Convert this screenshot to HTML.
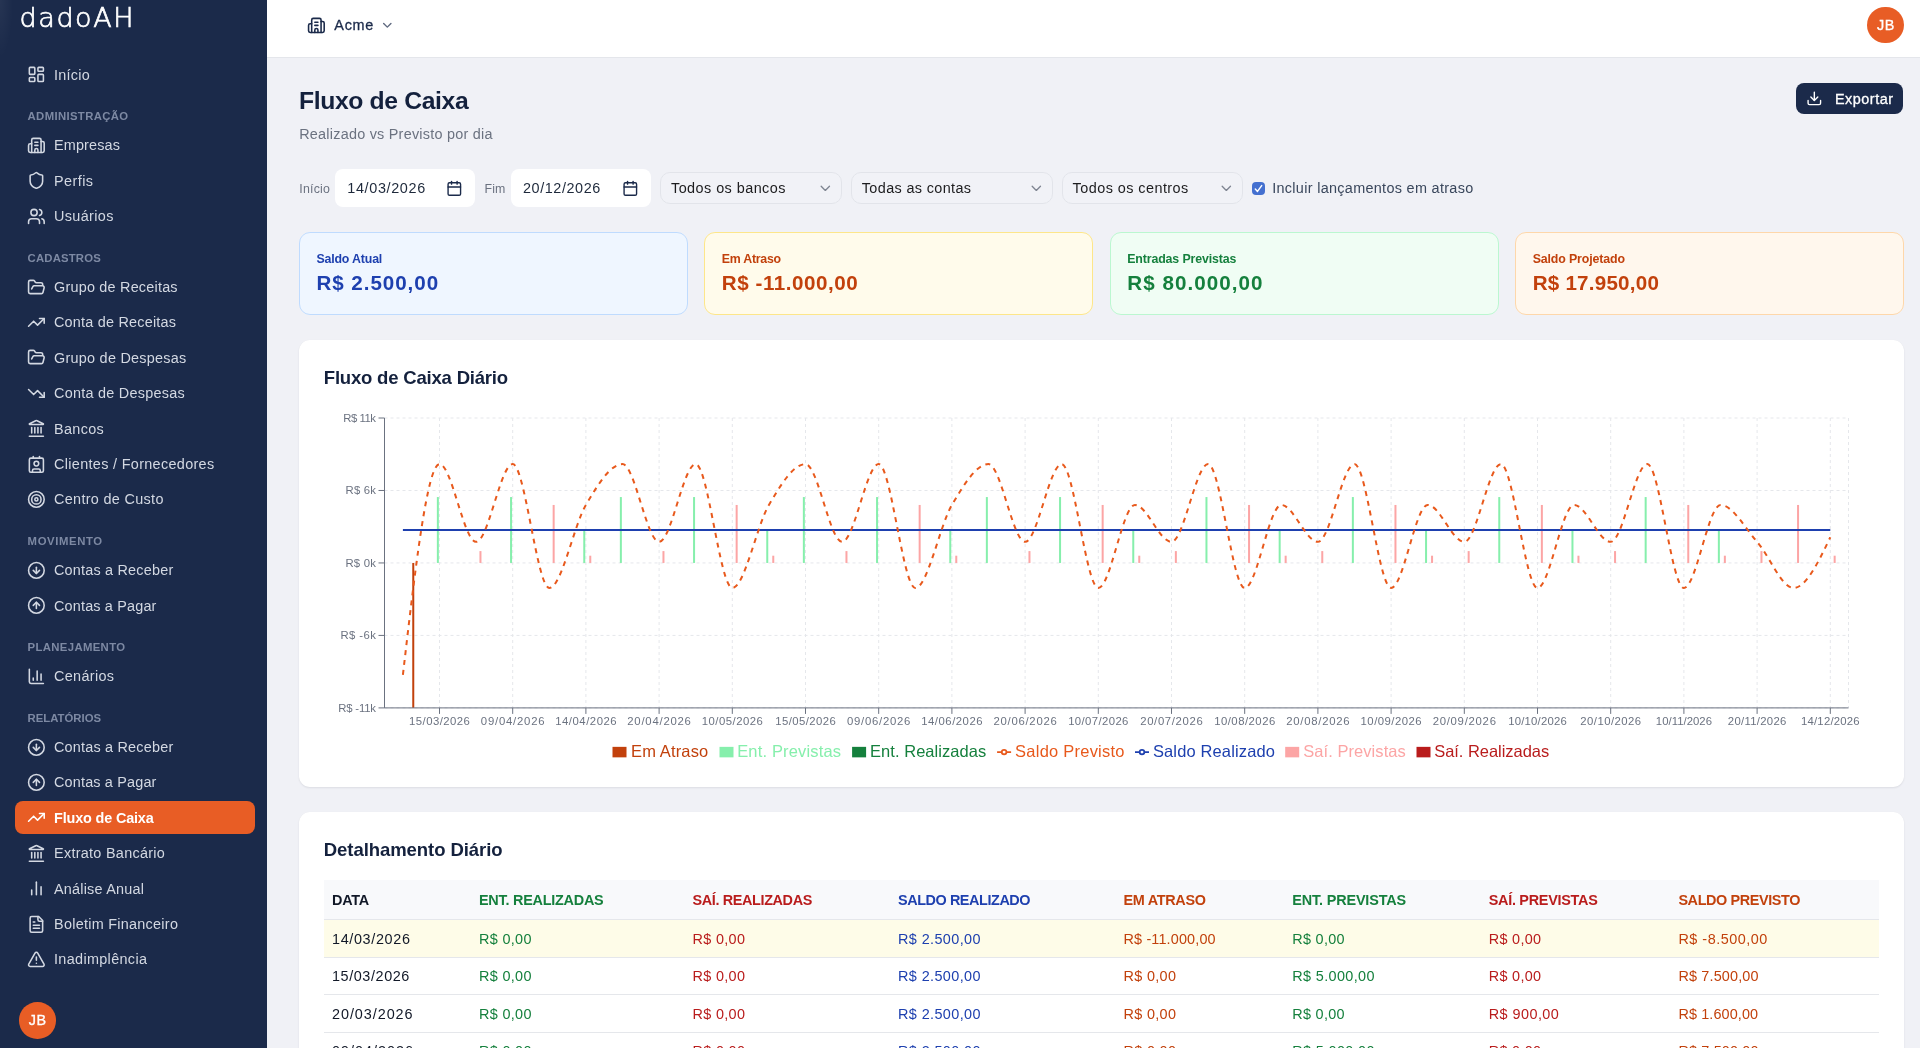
<!DOCTYPE html>
<html lang="pt-BR">
<head>
<meta charset="utf-8">
<title>Fluxo de Caixa - dadoAH</title>
<style>
html,body{margin:0;padding:0}
body{width:1920px;height:1048px;overflow:hidden;position:relative;background:#f0f1f6;font-family:"Liberation Sans",sans-serif;-webkit-font-smoothing:antialiased}
a{text-decoration:none}
</style>
</head>
<body>
<div id="app" style="position:absolute;left:0;top:0;width:1920px;height:1048px;will-change:transform">
<aside style="position:absolute;left:0;top:0;width:267px;height:1048px;background:radial-gradient(ellipse 13px 58px at 0 0, rgba(255,255,255,.05), rgba(255,255,255,0) 100%),#1b2a4a">
<div style="position:absolute;left:19.6px;top:1px;font-family:'DejaVu Sans','Liberation Sans',sans-serif;font-weight:200;font-size:27px;line-height:34px;letter-spacing:1.55px;-webkit-text-stroke:0.7px #fff;color:#fff;white-space:nowrap">dadoAH</div>
<nav>
<svg style="position:absolute;left:27.12px;top:65.42px;opacity:1" width="18.75" height="18.75" viewBox="0 0 24 24" fill="none" stroke="#d3d8e2" stroke-width="2" stroke-linecap="round" stroke-linejoin="round"><rect width="7" height="9" x="3" y="3" rx="1"/><rect width="7" height="5" x="14" y="3" rx="1"/><rect width="7" height="9" x="14" y="12" rx="1"/><rect width="7" height="5" x="3" y="16" rx="1"/></svg>
<a style="position:absolute;left:54.00px;top:65px;font-size:14.42px;line-height:20px;font-weight:400;letter-spacing:0.246px;color:#d3d8e2;white-space:nowrap;">Início</a>
<div style="position:absolute;left:27.60px;top:108px;font-size:11.33px;line-height:16px;font-weight:700;letter-spacing:0.35px;color:#7d89a3;white-space:nowrap;">ADMINISTRAÇÃO</div>
<svg style="position:absolute;left:27.12px;top:135.92px;opacity:1" width="18.75" height="18.75" viewBox="0 0 24 24" fill="none" stroke="#d3d8e2" stroke-width="2" stroke-linecap="round" stroke-linejoin="round"><path d="M10 12h4"/><path d="M10 8h4"/><path d="M14 21v-3a2 2 0 0 0-4 0v3"/><path d="M6 10H4a2 2 0 0 0-2 2v7a2 2 0 0 0 2 2h16a2 2 0 0 0 2-2V9a2 2 0 0 0-2-2h-2"/><path d="M6 21V5a2 2 0 0 1 2-2h8a2 2 0 0 1 2 2v16"/></svg>
<a style="position:absolute;left:54.00px;top:135px;font-size:14.42px;line-height:20px;font-weight:400;letter-spacing:0.156px;color:#d3d8e2;white-space:nowrap;">Empresas</a>
<svg style="position:absolute;left:27.12px;top:171.34px;opacity:1" width="18.75" height="18.75" viewBox="0 0 24 24" fill="none" stroke="#d3d8e2" stroke-width="2" stroke-linecap="round" stroke-linejoin="round"><path d="M20 13c0 5-3.5 7.5-7.66 8.95a1 1 0 0 1-.67-.01C7.5 20.5 4 18 4 13V6a1 1 0 0 1 1-1c2 0 4.5-1.2 6.24-2.72a1.17 1.17 0 0 1 1.52 0C14.51 3.81 17 5 19 5a1 1 0 0 1 1 1z"/></svg>
<a style="position:absolute;left:54.00px;top:171px;font-size:14.42px;line-height:20px;font-weight:400;letter-spacing:0.431px;color:#d3d8e2;white-space:nowrap;">Perfis</a>
<svg style="position:absolute;left:27.12px;top:206.76px;opacity:1" width="18.75" height="18.75" viewBox="0 0 24 24" fill="none" stroke="#d3d8e2" stroke-width="2" stroke-linecap="round" stroke-linejoin="round"><path d="M16 21v-2a4 4 0 0 0-4-4H6a4 4 0 0 0-4 4v2"/><circle cx="9" cy="7" r="4"/><path d="M22 21v-2a4 4 0 0 0-3-3.87"/><path d="M16 3.13a4 4 0 0 1 0 7.75"/></svg>
<a style="position:absolute;left:54.00px;top:206px;font-size:14.42px;line-height:20px;font-weight:400;letter-spacing:0.361px;color:#d3d8e2;white-space:nowrap;">Usuários</a>
<div style="position:absolute;left:27.60px;top:250px;font-size:11.33px;line-height:16px;font-weight:700;letter-spacing:0.171px;color:#7d89a3;white-space:nowrap;">CADASTROS</div>
<svg style="position:absolute;left:27.12px;top:277.52px;opacity:1" width="18.75" height="18.75" viewBox="0 0 24 24" fill="none" stroke="#d3d8e2" stroke-width="2" stroke-linecap="round" stroke-linejoin="round"><path d="m6 14 1.5-2.9A2 2 0 0 1 9.24 10H20a2 2 0 0 1 1.94 2.5l-1.54 6a2 2 0 0 1-1.95 1.5H4a2 2 0 0 1-2-2V5a2 2 0 0 1 2-2h3.9a2 2 0 0 1 1.69.9l.81 1.2a2 2 0 0 0 1.67.9H18a2 2 0 0 1 2 2v2"/></svg>
<a style="position:absolute;left:54.00px;top:277px;font-size:14.42px;line-height:20px;font-weight:400;letter-spacing:0.216px;color:#d3d8e2;white-space:nowrap;">Grupo de Receitas</a>
<svg style="position:absolute;left:27.12px;top:312.94px;opacity:1" width="18.75" height="18.75" viewBox="0 0 24 24" fill="none" stroke="#d3d8e2" stroke-width="2" stroke-linecap="round" stroke-linejoin="round"><path d="M16 7h6v6"/><path d="m22 7-8.5 8.5-5-5L2 17"/></svg>
<a style="position:absolute;left:54.00px;top:312px;font-size:14.42px;line-height:20px;font-weight:400;letter-spacing:0.217px;color:#d3d8e2;white-space:nowrap;">Conta de Receitas</a>
<svg style="position:absolute;left:27.12px;top:348.36px;opacity:1" width="18.75" height="18.75" viewBox="0 0 24 24" fill="none" stroke="#d3d8e2" stroke-width="2" stroke-linecap="round" stroke-linejoin="round"><path d="m6 14 1.5-2.9A2 2 0 0 1 9.24 10H20a2 2 0 0 1 1.94 2.5l-1.54 6a2 2 0 0 1-1.95 1.5H4a2 2 0 0 1-2-2V5a2 2 0 0 1 2-2h3.9a2 2 0 0 1 1.69.9l.81 1.2a2 2 0 0 0 1.67.9H18a2 2 0 0 1 2 2v2"/></svg>
<a style="position:absolute;left:54.00px;top:348px;font-size:14.42px;line-height:20px;font-weight:400;letter-spacing:0.261px;color:#d3d8e2;white-space:nowrap;">Grupo de Despesas</a>
<svg style="position:absolute;left:27.12px;top:383.78px;opacity:1" width="18.75" height="18.75" viewBox="0 0 24 24" fill="none" stroke="#d3d8e2" stroke-width="2" stroke-linecap="round" stroke-linejoin="round"><path d="M16 17h6v-6"/><path d="m22 17-8.5-8.5-5 5L2 7"/></svg>
<a style="position:absolute;left:54.00px;top:383px;font-size:14.42px;line-height:20px;font-weight:400;letter-spacing:0.262px;color:#d3d8e2;white-space:nowrap;">Conta de Despesas</a>
<svg style="position:absolute;left:27.12px;top:419.20px;opacity:1" width="18.75" height="18.75" viewBox="0 0 24 24" fill="none" stroke="#d3d8e2" stroke-width="2" stroke-linecap="round" stroke-linejoin="round"><path d="M10 18v-7"/><path d="M11.12 2.198a2 2 0 0 1 1.76.006l7.866 3.847c.476.233.31.949-.22.949H3.474c-.53 0-.695-.716-.22-.949z"/><path d="M14 18v-7"/><path d="M18 18v-7"/><path d="M3 22h18"/><path d="M6 18v-7"/></svg>
<a style="position:absolute;left:54.00px;top:419px;font-size:14.42px;line-height:20px;font-weight:400;letter-spacing:0.332px;color:#d3d8e2;white-space:nowrap;">Bancos</a>
<svg style="position:absolute;left:27.12px;top:454.62px;opacity:1" width="18.75" height="18.75" viewBox="0 0 24 24" fill="none" stroke="#d3d8e2" stroke-width="2" stroke-linecap="round" stroke-linejoin="round"><path d="M16 2v2"/><path d="M7 22v-2a2 2 0 0 1 2-2h6a2 2 0 0 1 2 2v2"/><path d="M8 2v2"/><circle cx="12" cy="11" r="3"/><rect x="3" y="4" width="18" height="18" rx="2"/></svg>
<a style="position:absolute;left:54.00px;top:454px;font-size:14.42px;line-height:20px;font-weight:400;letter-spacing:0.328px;color:#d3d8e2;white-space:nowrap;">Clientes / Fornecedores</a>
<svg style="position:absolute;left:27.12px;top:490.05px;opacity:1" width="18.75" height="18.75" viewBox="0 0 24 24" fill="none" stroke="#d3d8e2" stroke-width="2" stroke-linecap="round" stroke-linejoin="round"><circle cx="12" cy="12" r="10"/><circle cx="12" cy="12" r="6"/><circle cx="12" cy="12" r="2"/></svg>
<a style="position:absolute;left:54.00px;top:489px;font-size:14.42px;line-height:20px;font-weight:400;letter-spacing:0.323px;color:#d3d8e2;white-space:nowrap;">Centro de Custo</a>
<div style="position:absolute;left:27.60px;top:533px;font-size:11.33px;line-height:16px;font-weight:700;letter-spacing:0.601px;color:#7d89a3;white-space:nowrap;">MOVIMENTO</div>
<svg style="position:absolute;left:27.12px;top:560.83px;opacity:1" width="18.75" height="18.75" viewBox="0 0 24 24" fill="none" stroke="#d3d8e2" stroke-width="2" stroke-linecap="round" stroke-linejoin="round"><circle cx="12" cy="12" r="10"/><path d="M12 8v8"/><path d="m8 12 4 4 4-4"/></svg>
<a style="position:absolute;left:54.00px;top:560px;font-size:14.42px;line-height:20px;font-weight:400;letter-spacing:0.205px;color:#d3d8e2;white-space:nowrap;">Contas a Receber</a>
<svg style="position:absolute;left:27.12px;top:596.25px;opacity:1" width="18.75" height="18.75" viewBox="0 0 24 24" fill="none" stroke="#d3d8e2" stroke-width="2" stroke-linecap="round" stroke-linejoin="round"><circle cx="12" cy="12" r="10"/><path d="m16 12-4-4-4 4"/><path d="M12 16V8"/></svg>
<a style="position:absolute;left:54.00px;top:596px;font-size:14.42px;line-height:20px;font-weight:400;letter-spacing:0.174px;color:#d3d8e2;white-space:nowrap;">Contas a Pagar</a>
<div style="position:absolute;left:27.60px;top:639px;font-size:11.33px;line-height:16px;font-weight:700;letter-spacing:0.351px;color:#7d89a3;white-space:nowrap;">PLANEJAMENTO</div>
<svg style="position:absolute;left:27.12px;top:666.93px;opacity:1" width="18.75" height="18.75" viewBox="0 0 24 24" fill="none" stroke="#d3d8e2" stroke-width="2" stroke-linecap="round" stroke-linejoin="round"><path d="M3 3v16a2 2 0 0 0 2 2h16"/><path d="M18 17V9"/><path d="M13 17V5"/><path d="M8 17v-3"/></svg>
<a style="position:absolute;left:54.00px;top:666px;font-size:14.42px;line-height:20px;font-weight:400;letter-spacing:0.329px;color:#d3d8e2;white-space:nowrap;">Cenários</a>
<div style="position:absolute;left:27.60px;top:710px;font-size:11.33px;line-height:16px;font-weight:700;letter-spacing:0.007px;color:#7d89a3;white-space:nowrap;">RELATÓRIOS</div>
<svg style="position:absolute;left:27.12px;top:737.53px;opacity:1" width="18.75" height="18.75" viewBox="0 0 24 24" fill="none" stroke="#d3d8e2" stroke-width="2" stroke-linecap="round" stroke-linejoin="round"><circle cx="12" cy="12" r="10"/><path d="M12 8v8"/><path d="m8 12 4 4 4-4"/></svg>
<a style="position:absolute;left:54.00px;top:737px;font-size:14.42px;line-height:20px;font-weight:400;letter-spacing:0.205px;color:#d3d8e2;white-space:nowrap;">Contas a Receber</a>
<svg style="position:absolute;left:27.12px;top:772.95px;opacity:1" width="18.75" height="18.75" viewBox="0 0 24 24" fill="none" stroke="#d3d8e2" stroke-width="2" stroke-linecap="round" stroke-linejoin="round"><circle cx="12" cy="12" r="10"/><path d="m16 12-4-4-4 4"/><path d="M12 16V8"/></svg>
<a style="position:absolute;left:54.00px;top:772px;font-size:14.42px;line-height:20px;font-weight:400;letter-spacing:0.174px;color:#d3d8e2;white-space:nowrap;">Contas a Pagar</a>
<div style="position:absolute;left:15px;top:800.89px;width:240px;height:33.3px;border-radius:8px;background:#e85d25"></div>
<svg style="position:absolute;left:27.12px;top:808.37px;opacity:1" width="18.75" height="18.75" viewBox="0 0 24 24" fill="none" stroke="#ffffff" stroke-width="2" stroke-linecap="round" stroke-linejoin="round"><path d="M16 7h6v6"/><path d="m22 7-8.5 8.5-5-5L2 17"/></svg>
<a style="position:absolute;left:54.00px;top:808px;font-size:14.42px;line-height:20px;font-weight:700;letter-spacing:-0.15px;color:#ffffff;white-space:nowrap;">Fluxo de Caixa</a>
<svg style="position:absolute;left:27.12px;top:843.79px;opacity:1" width="18.75" height="18.75" viewBox="0 0 24 24" fill="none" stroke="#d3d8e2" stroke-width="2" stroke-linecap="round" stroke-linejoin="round"><path d="M10 18v-7"/><path d="M11.12 2.198a2 2 0 0 1 1.76.006l7.866 3.847c.476.233.31.949-.22.949H3.474c-.53 0-.695-.716-.22-.949z"/><path d="M14 18v-7"/><path d="M18 18v-7"/><path d="M3 22h18"/><path d="M6 18v-7"/></svg>
<a style="position:absolute;left:54.00px;top:843px;font-size:14.42px;line-height:20px;font-weight:400;letter-spacing:0.287px;color:#d3d8e2;white-space:nowrap;">Extrato Bancário</a>
<svg style="position:absolute;left:27.12px;top:879.21px;opacity:1" width="18.75" height="18.75" viewBox="0 0 24 24" fill="none" stroke="#d3d8e2" stroke-width="2" stroke-linecap="round" stroke-linejoin="round"><path d="M18 20V10"/><path d="M12 20V4"/><path d="M6 20v-6"/></svg>
<a style="position:absolute;left:54.00px;top:879px;font-size:14.42px;line-height:20px;font-weight:400;letter-spacing:0.216px;color:#d3d8e2;white-space:nowrap;">Análise Anual</a>
<svg style="position:absolute;left:27.12px;top:914.63px;opacity:1" width="18.75" height="18.75" viewBox="0 0 24 24" fill="none" stroke="#d3d8e2" stroke-width="2" stroke-linecap="round" stroke-linejoin="round"><path d="M15 2H6a2 2 0 0 0-2 2v16a2 2 0 0 0 2 2h12a2 2 0 0 0 2-2V7Z"/><path d="M14 2v4a2 2 0 0 0 2 2h4"/><path d="M10 9H8"/><path d="M16 13H8"/><path d="M16 17H8"/></svg>
<a style="position:absolute;left:54.00px;top:914px;font-size:14.42px;line-height:20px;font-weight:400;letter-spacing:0.271px;color:#d3d8e2;white-space:nowrap;">Boletim Financeiro</a>
<svg style="position:absolute;left:27.12px;top:950.05px;opacity:1" width="18.75" height="18.75" viewBox="0 0 24 24" fill="none" stroke="#d3d8e2" stroke-width="2" stroke-linecap="round" stroke-linejoin="round"><path d="m21.73 18-8-14a2 2 0 0 0-3.48 0l-8 14A2 2 0 0 0 4 21h16a2 2 0 0 0 1.73-3"/><path d="M12 9v4"/><path d="M12 17h.01"/></svg>
<a style="position:absolute;left:54.00px;top:949px;font-size:14.42px;line-height:20px;font-weight:400;letter-spacing:0.339px;color:#d3d8e2;white-space:nowrap;">Inadimplência</a>
</nav>
<div style="position:absolute;left:19px;top:1002.1px;width:36.6px;height:36.6px;border-radius:50%;background:#e85d25"></div>
<div style="position:absolute;left:28.66px;top:1010px;font-size:14.42px;line-height:20px;font-weight:400;letter-spacing:0.659px;color:#fff;white-space:nowrap;-webkit-text-stroke:0.3px #fff;">JB</div>
</aside>
<header style="position:absolute;left:267px;top:0;width:1653px;height:57px;background:#fff;border-bottom:1px solid #e4e6eb">
</header>
<svg style="position:absolute;left:307.12px;top:15.57px;opacity:1" width="18.75" height="18.75" viewBox="0 0 24 24" fill="none" stroke="#1b2a4a" stroke-width="2" stroke-linecap="round" stroke-linejoin="round"><path d="M10 12h4"/><path d="M10 8h4"/><path d="M14 21v-3a2 2 0 0 0-4 0v3"/><path d="M6 10H4a2 2 0 0 0-2 2v7a2 2 0 0 0 2 2h16a2 2 0 0 0 2-2V9a2 2 0 0 0-2-2h-2"/><path d="M6 21V5a2 2 0 0 1 2-2h8a2 2 0 0 1 2 2v16"/></svg>
<div style="position:absolute;left:334.30px;top:15px;font-size:14.42px;line-height:20px;font-weight:400;letter-spacing:0.744px;color:#1b2a4a;white-space:nowrap;-webkit-text-stroke:0.3px #1b2a4a;">Acme</div>
<svg style="position:absolute;left:379.60px;top:17.80px;opacity:0.7" width="14.6" height="14.6" viewBox="0 0 24 24" fill="none" stroke="#1b2a4a" stroke-width="2.3" stroke-linecap="round" stroke-linejoin="round"><path d="m6 9 6 6 6-6"/></svg>
<div style="position:absolute;left:1867.3px;top:6.7px;width:36.6px;height:36.6px;border-radius:50%;background:#e85d25"></div>
<div style="position:absolute;left:1876.96px;top:15px;font-size:14.42px;line-height:20px;font-weight:400;letter-spacing:0.659px;color:#fff;white-space:nowrap;-webkit-text-stroke:0.3px #fff;">JB</div>
<h1 style="position:absolute;left:299.00px;top:85px;font-size:24.72px;line-height:31px;font-weight:700;letter-spacing:-0.371px;color:#14213d;white-space:nowrap;margin:0;">Fluxo de Caixa</h1>
<p style="position:absolute;left:299.20px;top:124px;font-size:14.42px;line-height:20px;font-weight:400;letter-spacing:0.237px;color:#6b7280;white-space:nowrap;margin:0;">Realizado vs Previsto por dia</p>
<div style="position:absolute;left:1796px;top:83px;width:107px;height:31px;border-radius:8px;background:#1b2a4a"></div>
<svg style="position:absolute;left:1806.16px;top:90.16px;opacity:1" width="16.67" height="16.67" viewBox="0 0 24 24" fill="none" stroke="#fff" stroke-width="2" stroke-linecap="round" stroke-linejoin="round"><path d="M21 15v4a2 2 0 0 1-2 2H5a2 2 0 0 1-2-2v-4"/><path d="m7 10 5 5 5-5"/><path d="M12 15V3"/></svg>
<div style="position:absolute;left:1835.00px;top:89px;font-size:14.42px;line-height:20px;font-weight:400;letter-spacing:0.5px;color:#fff;white-space:nowrap;-webkit-text-stroke:0.3px #fff;">Exportar</div>
<div style="position:absolute;left:299.30px;top:180px;font-size:12.36px;line-height:18px;font-weight:400;letter-spacing:0.205px;color:#6b7280;white-space:nowrap;">Início</div>
<div style="position:absolute;left:335.1px;top:169.4px;width:140.2px;height:37.6px;border-radius:8px;background:#fff"></div>
<div style="position:absolute;left:347.30px;top:178px;font-size:14.42px;line-height:20px;font-weight:400;letter-spacing:0.644px;color:#1e293b;white-space:nowrap;">14/03/2026</div>
<svg style="position:absolute;left:446.42px;top:180.06px;opacity:1" width="16.67" height="16.67" viewBox="0 0 24 24" fill="none" stroke="#1b2a4a" stroke-width="2" stroke-linecap="round" stroke-linejoin="round"><path d="M8 2v4"/><path d="M16 2v4"/><rect width="18" height="18" x="3" y="4" rx="2"/><path d="M3 10h18"/></svg>
<div style="position:absolute;left:484.60px;top:180px;font-size:12.36px;line-height:18px;font-weight:400;letter-spacing:0.089px;color:#6b7280;white-space:nowrap;">Fim</div>
<div style="position:absolute;left:510.7px;top:169.4px;width:140.2px;height:37.6px;border-radius:8px;background:#fff"></div>
<div style="position:absolute;left:523.00px;top:178px;font-size:14.42px;line-height:20px;font-weight:400;letter-spacing:0.575px;color:#1e293b;white-space:nowrap;">20/12/2026</div>
<svg style="position:absolute;left:621.96px;top:180.06px;opacity:1" width="16.67" height="16.67" viewBox="0 0 24 24" fill="none" stroke="#1b2a4a" stroke-width="2" stroke-linecap="round" stroke-linejoin="round"><path d="M8 2v4"/><path d="M16 2v4"/><rect width="18" height="18" x="3" y="4" rx="2"/><path d="M3 10h18"/></svg>
<div style="position:absolute;left:660.2px;top:172px;width:181.4px;height:32.4px;box-sizing:border-box;border:1px solid #e2e4ea;border-radius:10px;background:#f1f2f7"></div>
<div style="position:absolute;left:671.00px;top:178px;font-size:14.42px;line-height:20px;font-weight:400;letter-spacing:0.452px;color:#1c1c1e;white-space:nowrap;">Todos os bancos</div>
<svg style="position:absolute;left:816.87px;top:180.06px;opacity:0.85" width="16.67" height="16.67" viewBox="0 0 24 24" fill="none" stroke="#6b7280" stroke-width="1.9" stroke-linecap="round" stroke-linejoin="round"><path d="m6 9 6 6 6-6"/></svg>
<div style="position:absolute;left:851.0px;top:172px;width:201.5px;height:32.4px;box-sizing:border-box;border:1px solid #e2e4ea;border-radius:10px;background:#f1f2f7"></div>
<div style="position:absolute;left:861.80px;top:178px;font-size:14.42px;line-height:20px;font-weight:400;letter-spacing:0.368px;color:#1c1c1e;white-space:nowrap;">Todas as contas</div>
<svg style="position:absolute;left:1027.87px;top:180.06px;opacity:0.85" width="16.67" height="16.67" viewBox="0 0 24 24" fill="none" stroke="#6b7280" stroke-width="1.9" stroke-linecap="round" stroke-linejoin="round"><path d="m6 9 6 6 6-6"/></svg>
<div style="position:absolute;left:1061.5px;top:172px;width:181.7px;height:32.4px;box-sizing:border-box;border:1px solid #e2e4ea;border-radius:10px;background:#f1f2f7"></div>
<div style="position:absolute;left:1072.60px;top:178px;font-size:14.42px;line-height:20px;font-weight:400;letter-spacing:0.451px;color:#1c1c1e;white-space:nowrap;">Todos os centros</div>
<svg style="position:absolute;left:1218.46px;top:180.06px;opacity:0.85" width="16.67" height="16.67" viewBox="0 0 24 24" fill="none" stroke="#6b7280" stroke-width="1.9" stroke-linecap="round" stroke-linejoin="round"><path d="m6 9 6 6 6-6"/></svg>
<div style="position:absolute;left:1251.9px;top:181.9px;width:12.7px;height:12.7px;border-radius:4px;background:#4470d0"></div>
<svg style="position:absolute;left:1251.9px;top:181.9px" width="12.7" height="12.7" viewBox="0 0 12.7 12.7" fill="none" stroke="#fff" stroke-width="1.45" stroke-linecap="round" stroke-linejoin="round"><path d="M3.3 7.0L5.5 9.4L9.7 3.6"/></svg>
<div style="position:absolute;left:1272.20px;top:178px;font-size:14.42px;line-height:20px;font-weight:400;letter-spacing:0.315px;color:#3a475c;white-space:nowrap;">Incluir lançamentos em atraso</div>
<div style="position:absolute;left:299.00px;top:232px;width:388.75px;height:83.3px;box-sizing:border-box;border:1px solid #bfdbfe;border-radius:11px;background:#eff6ff"></div>
<div style="position:absolute;left:316.40px;top:250px;font-size:12.36px;line-height:18px;font-weight:700;letter-spacing:-0.162px;color:#1e40af;white-space:nowrap;">Saldo Atual</div>
<div style="position:absolute;left:316.40px;top:269px;font-size:20.6px;line-height:27px;font-weight:700;letter-spacing:0.953px;color:#1e40af;white-space:nowrap;">R$ 2.500,00</div>
<div style="position:absolute;left:704.42px;top:232px;width:388.75px;height:83.3px;box-sizing:border-box;border:1px solid #fde68a;border-radius:11px;background:#fffbeb"></div>
<div style="position:absolute;left:721.82px;top:250px;font-size:12.36px;line-height:18px;font-weight:700;letter-spacing:-0.252px;color:#c2410c;white-space:nowrap;">Em Atraso</div>
<div style="position:absolute;left:721.82px;top:269px;font-size:20.6px;line-height:27px;font-weight:700;letter-spacing:0.545px;color:#c2410c;white-space:nowrap;">R$ -11.000,00</div>
<div style="position:absolute;left:1109.84px;top:232px;width:388.75px;height:83.3px;box-sizing:border-box;border:1px solid #bbf7d0;border-radius:11px;background:#f0fdf4"></div>
<div style="position:absolute;left:1127.24px;top:250px;font-size:12.36px;line-height:18px;font-weight:700;letter-spacing:-0.127px;color:#15803d;white-space:nowrap;">Entradas Previstas</div>
<div style="position:absolute;left:1127.24px;top:269px;font-size:20.6px;line-height:27px;font-weight:700;letter-spacing:1.052px;color:#15803d;white-space:nowrap;">R$ 80.000,00</div>
<div style="position:absolute;left:1515.26px;top:232px;width:388.75px;height:83.3px;box-sizing:border-box;border:1px solid #fed7aa;border-radius:11px;background:#fff7ed"></div>
<div style="position:absolute;left:1532.66px;top:250px;font-size:12.36px;line-height:18px;font-weight:700;letter-spacing:-0.125px;color:#c2410c;white-space:nowrap;">Saldo Projetado</div>
<div style="position:absolute;left:1532.66px;top:269px;font-size:20.6px;line-height:27px;font-weight:700;letter-spacing:0.235px;color:#c2410c;white-space:nowrap;">R$ 17.950,00</div>
<section style="position:absolute;left:299px;top:340px;width:1605px;height:447px;border-radius:11px;background:#fff;box-shadow:0 1px 2px rgba(15,23,42,.09),0 0 1px rgba(15,23,42,.06)"></section>
<h2 style="position:absolute;left:323.80px;top:365px;font-size:18.54px;line-height:25px;font-weight:700;letter-spacing:-0.206px;color:#14213d;white-space:nowrap;margin:0;">Fluxo de Caixa Diário</h2>
<svg style="position:absolute;left:299px;top:340px" width="1604" height="447" viewBox="299 340 1604 447" font-family="'Liberation Sans', sans-serif">
<g stroke="#e5e7eb" stroke-width="1" stroke-dasharray="3 3" fill="none"><line x1="384.5" x2="1848.5" y1="418.00" y2="418.00"/><line x1="384.5" x2="1848.5" y1="490.48" y2="490.48"/><line x1="384.5" x2="1848.5" y1="562.95" y2="562.95"/><line x1="384.5" x2="1848.5" y1="635.42" y2="635.42"/><line x1="384.5" x2="1848.5" y1="707.90" y2="707.90"/><line x1="384.50" x2="384.50" y1="418.0" y2="707.9"/><line x1="439.50" x2="439.50" y1="418.0" y2="707.9"/><line x1="512.70" x2="512.70" y1="418.0" y2="707.9"/><line x1="585.90" x2="585.90" y1="418.0" y2="707.9"/><line x1="659.10" x2="659.10" y1="418.0" y2="707.9"/><line x1="732.30" x2="732.30" y1="418.0" y2="707.9"/><line x1="805.50" x2="805.50" y1="418.0" y2="707.9"/><line x1="878.70" x2="878.70" y1="418.0" y2="707.9"/><line x1="951.90" x2="951.90" y1="418.0" y2="707.9"/><line x1="1025.10" x2="1025.10" y1="418.0" y2="707.9"/><line x1="1098.30" x2="1098.30" y1="418.0" y2="707.9"/><line x1="1171.50" x2="1171.50" y1="418.0" y2="707.9"/><line x1="1244.70" x2="1244.70" y1="418.0" y2="707.9"/><line x1="1317.90" x2="1317.90" y1="418.0" y2="707.9"/><line x1="1391.10" x2="1391.10" y1="418.0" y2="707.9"/><line x1="1464.30" x2="1464.30" y1="418.0" y2="707.9"/><line x1="1537.50" x2="1537.50" y1="418.0" y2="707.9"/><line x1="1610.70" x2="1610.70" y1="418.0" y2="707.9"/><line x1="1683.90" x2="1683.90" y1="418.0" y2="707.9"/><line x1="1757.10" x2="1757.10" y1="418.0" y2="707.9"/><line x1="1830.30" x2="1830.30" y1="418.0" y2="707.9"/><line x1="1848.50" x2="1848.50" y1="418.0" y2="707.9"/></g>
<g><rect x="412.26" y="562.95" width="2" height="144.95" fill="#c2410c"/><rect x="436.86" y="497.06" width="2" height="65.89" fill="#86efac"/><rect x="479.46" y="551.09" width="2" height="11.86" fill="#fca5a5"/><rect x="510.06" y="497.06" width="2" height="65.89" fill="#86efac"/><rect x="552.66" y="504.97" width="2" height="57.98" fill="#fca5a5"/><rect x="583.26" y="530.67" width="2" height="32.28" fill="#86efac"/><rect x="589.26" y="555.70" width="2" height="7.25" fill="#fca5a5"/><rect x="619.86" y="497.06" width="2" height="65.89" fill="#86efac"/><rect x="662.46" y="551.09" width="2" height="11.86" fill="#fca5a5"/><rect x="693.06" y="497.06" width="2" height="65.89" fill="#86efac"/><rect x="735.66" y="504.97" width="2" height="57.98" fill="#fca5a5"/><rect x="766.26" y="530.67" width="2" height="32.28" fill="#86efac"/><rect x="772.26" y="555.70" width="2" height="7.25" fill="#fca5a5"/><rect x="802.86" y="497.06" width="2" height="65.89" fill="#86efac"/><rect x="845.46" y="551.09" width="2" height="11.86" fill="#fca5a5"/><rect x="876.06" y="497.06" width="2" height="65.89" fill="#86efac"/><rect x="918.66" y="504.97" width="2" height="57.98" fill="#fca5a5"/><rect x="949.26" y="530.67" width="2" height="32.28" fill="#86efac"/><rect x="955.26" y="555.70" width="2" height="7.25" fill="#fca5a5"/><rect x="985.86" y="497.06" width="2" height="65.89" fill="#86efac"/><rect x="1028.46" y="551.09" width="2" height="11.86" fill="#fca5a5"/><rect x="1059.06" y="497.06" width="2" height="65.89" fill="#86efac"/><rect x="1101.66" y="504.97" width="2" height="57.98" fill="#fca5a5"/><rect x="1132.26" y="530.67" width="2" height="32.28" fill="#86efac"/><rect x="1138.26" y="555.70" width="2" height="7.25" fill="#fca5a5"/><rect x="1174.86" y="551.09" width="2" height="11.86" fill="#fca5a5"/><rect x="1205.46" y="497.06" width="2" height="65.89" fill="#86efac"/><rect x="1248.06" y="504.97" width="2" height="57.98" fill="#fca5a5"/><rect x="1278.66" y="530.67" width="2" height="32.28" fill="#86efac"/><rect x="1284.66" y="555.70" width="2" height="7.25" fill="#fca5a5"/><rect x="1321.26" y="551.09" width="2" height="11.86" fill="#fca5a5"/><rect x="1351.86" y="497.06" width="2" height="65.89" fill="#86efac"/><rect x="1394.46" y="504.97" width="2" height="57.98" fill="#fca5a5"/><rect x="1425.06" y="530.67" width="2" height="32.28" fill="#86efac"/><rect x="1431.06" y="555.70" width="2" height="7.25" fill="#fca5a5"/><rect x="1467.66" y="551.09" width="2" height="11.86" fill="#fca5a5"/><rect x="1498.26" y="497.06" width="2" height="65.89" fill="#86efac"/><rect x="1540.86" y="504.97" width="2" height="57.98" fill="#fca5a5"/><rect x="1571.46" y="530.67" width="2" height="32.28" fill="#86efac"/><rect x="1577.46" y="555.70" width="2" height="7.25" fill="#fca5a5"/><rect x="1614.06" y="551.09" width="2" height="11.86" fill="#fca5a5"/><rect x="1644.66" y="497.06" width="2" height="65.89" fill="#86efac"/><rect x="1687.26" y="504.97" width="2" height="57.98" fill="#fca5a5"/><rect x="1717.86" y="530.67" width="2" height="32.28" fill="#86efac"/><rect x="1723.86" y="555.70" width="2" height="7.25" fill="#fca5a5"/><rect x="1760.46" y="551.09" width="2" height="11.86" fill="#fca5a5"/><rect x="1797.06" y="504.97" width="2" height="57.98" fill="#fca5a5"/><rect x="1833.66" y="555.70" width="2" height="7.25" fill="#fca5a5"/></g>
<g stroke="#6b7280" stroke-width="1" fill="none"><line x1="384.5" x2="1848.5" y1="707.9" y2="707.9"/><line x1="384.5" x2="384.5" y1="418.0" y2="707.9"/><line x1="378.5" x2="384.5" y1="418.00" y2="418.00"/><line x1="378.5" x2="384.5" y1="490.48" y2="490.48"/><line x1="378.5" x2="384.5" y1="562.95" y2="562.95"/><line x1="378.5" x2="384.5" y1="635.42" y2="635.42"/><line x1="378.5" x2="384.5" y1="707.90" y2="707.90"/><line x1="439.50" x2="439.50" y1="707.9" y2="713.9"/><line x1="512.70" x2="512.70" y1="707.9" y2="713.9"/><line x1="585.90" x2="585.90" y1="707.9" y2="713.9"/><line x1="659.10" x2="659.10" y1="707.9" y2="713.9"/><line x1="732.30" x2="732.30" y1="707.9" y2="713.9"/><line x1="805.50" x2="805.50" y1="707.9" y2="713.9"/><line x1="878.70" x2="878.70" y1="707.9" y2="713.9"/><line x1="951.90" x2="951.90" y1="707.9" y2="713.9"/><line x1="1025.10" x2="1025.10" y1="707.9" y2="713.9"/><line x1="1098.30" x2="1098.30" y1="707.9" y2="713.9"/><line x1="1171.50" x2="1171.50" y1="707.9" y2="713.9"/><line x1="1244.70" x2="1244.70" y1="707.9" y2="713.9"/><line x1="1317.90" x2="1317.90" y1="707.9" y2="713.9"/><line x1="1391.10" x2="1391.10" y1="707.9" y2="713.9"/><line x1="1464.30" x2="1464.30" y1="707.9" y2="713.9"/><line x1="1537.50" x2="1537.50" y1="707.9" y2="713.9"/><line x1="1610.70" x2="1610.70" y1="707.9" y2="713.9"/><line x1="1683.90" x2="1683.90" y1="707.9" y2="713.9"/><line x1="1757.10" x2="1757.10" y1="707.9" y2="713.9"/><line x1="1830.30" x2="1830.30" y1="707.9" y2="713.9"/></g>
<g><text x="375.52" y="422.00" font-size="11.33" letter-spacing="-0.483" fill="#6b7280" text-anchor="end" font-weight="400">R$ 11k</text><text x="376.22" y="494.48" font-size="11.33" letter-spacing="0.222" fill="#6b7280" text-anchor="end" font-weight="400">R$ 6k</text><text x="376.25" y="566.95" font-size="11.33" letter-spacing="0.252" fill="#6b7280" text-anchor="end" font-weight="400">R$ 0k</text><text x="376.45" y="639.42" font-size="11.33" letter-spacing="0.448" fill="#6b7280" text-anchor="end" font-weight="400">R$ -6k</text><text x="375.82" y="711.90" font-size="11.33" letter-spacing="-0.177" fill="#6b7280" text-anchor="end" font-weight="400">R$ -11k</text><text x="439.73" y="724.50" font-size="11.33" letter-spacing="0.454" fill="#6b7280" text-anchor="middle" font-weight="400">15/03/2026</text><text x="513.09" y="724.50" font-size="11.33" letter-spacing="0.781" fill="#6b7280" text-anchor="middle" font-weight="400">09/04/2026</text><text x="586.17" y="724.50" font-size="11.33" letter-spacing="0.536" fill="#6b7280" text-anchor="middle" font-weight="400">14/04/2026</text><text x="659.48" y="724.50" font-size="11.33" letter-spacing="0.769" fill="#6b7280" text-anchor="middle" font-weight="400">20/04/2026</text><text x="732.53" y="724.50" font-size="11.33" letter-spacing="0.47" fill="#6b7280" text-anchor="middle" font-weight="400">10/05/2026</text><text x="805.72" y="724.50" font-size="11.33" letter-spacing="0.442" fill="#6b7280" text-anchor="middle" font-weight="400">15/05/2026</text><text x="879.07" y="724.50" font-size="11.33" letter-spacing="0.749" fill="#6b7280" text-anchor="middle" font-weight="400">09/06/2026</text><text x="952.15" y="724.50" font-size="11.33" letter-spacing="0.504" fill="#6b7280" text-anchor="middle" font-weight="400">14/06/2026</text><text x="1025.47" y="724.50" font-size="11.33" letter-spacing="0.737" fill="#6b7280" text-anchor="middle" font-weight="400">20/06/2026</text><text x="1098.50" y="724.50" font-size="11.33" letter-spacing="0.394" fill="#6b7280" text-anchor="middle" font-weight="400">10/07/2026</text><text x="1171.82" y="724.50" font-size="11.33" letter-spacing="0.645" fill="#6b7280" text-anchor="middle" font-weight="400">20/07/2026</text><text x="1244.94" y="724.50" font-size="11.33" letter-spacing="0.483" fill="#6b7280" text-anchor="middle" font-weight="400">10/08/2026</text><text x="1318.27" y="724.50" font-size="11.33" letter-spacing="0.735" fill="#6b7280" text-anchor="middle" font-weight="400">20/08/2026</text><text x="1391.34" y="724.50" font-size="11.33" letter-spacing="0.485" fill="#6b7280" text-anchor="middle" font-weight="400">10/09/2026</text><text x="1464.67" y="724.50" font-size="11.33" letter-spacing="0.737" fill="#6b7280" text-anchor="middle" font-weight="400">20/09/2026</text><text x="1537.61" y="724.50" font-size="11.33" letter-spacing="0.221" fill="#6b7280" text-anchor="middle" font-weight="400">10/10/2026</text><text x="1610.94" y="724.50" font-size="11.33" letter-spacing="0.473" fill="#6b7280" text-anchor="middle" font-weight="400">20/10/2026</text><text x="1683.92" y="724.50" font-size="11.33" letter-spacing="0.037" fill="#6b7280" text-anchor="middle" font-weight="400">10/11/2026</text><text x="1757.24" y="724.50" font-size="11.33" letter-spacing="0.289" fill="#6b7280" text-anchor="middle" font-weight="400">20/11/2026</text><text x="1830.41" y="724.50" font-size="11.33" letter-spacing="0.214" fill="#6b7280" text-anchor="middle" font-weight="400">14/12/2026</text></g>
<path d="M402.90,530.01L1830.30,530.01" stroke="#1e40af" stroke-width="2" fill="none"/>
<path d="M402.90,674.96C415.10,569.54,427.30,464.12,439.50,464.12C451.70,464.12,463.90,541.87,476.10,541.87C488.30,541.87,500.50,464.12,512.70,464.12C524.90,464.12,537.10,587.99,549.30,587.99C561.50,587.99,573.70,525.61,585.90,504.97C598.10,484.33,610.30,464.12,622.50,464.12C634.70,464.12,646.90,541.87,659.10,541.87C671.30,541.87,683.50,464.12,695.70,464.12C707.90,464.12,720.10,587.99,732.30,587.99C744.50,587.99,756.70,525.61,768.90,504.97C781.10,484.33,793.30,464.12,805.50,464.12C817.70,464.12,829.90,541.87,842.10,541.87C854.30,541.87,866.50,464.12,878.70,464.12C890.90,464.12,903.10,587.99,915.30,587.99C927.50,587.99,939.70,525.61,951.90,504.97C964.10,484.33,976.30,464.12,988.50,464.12C1000.70,464.12,1012.90,541.87,1025.10,541.87C1037.30,541.87,1049.50,464.12,1061.70,464.12C1073.90,464.12,1086.10,587.99,1098.30,587.99C1110.50,587.99,1122.70,504.97,1134.90,504.97C1147.10,504.97,1159.30,541.87,1171.50,541.87C1183.70,541.87,1195.90,464.12,1208.10,464.12C1220.30,464.12,1232.50,587.99,1244.70,587.99C1256.90,587.99,1269.10,504.97,1281.30,504.97C1293.50,504.97,1305.70,541.87,1317.90,541.87C1330.10,541.87,1342.30,464.12,1354.50,464.12C1366.70,464.12,1378.90,587.99,1391.10,587.99C1403.30,587.99,1415.50,504.97,1427.70,504.97C1439.90,504.97,1452.10,541.87,1464.30,541.87C1476.50,541.87,1488.70,464.12,1500.90,464.12C1513.10,464.12,1525.30,587.99,1537.50,587.99C1549.70,587.99,1561.90,504.97,1574.10,504.97C1586.30,504.97,1598.50,541.87,1610.70,541.87C1622.90,541.87,1635.10,464.12,1647.30,464.12C1659.50,464.12,1671.70,587.99,1683.90,587.99C1696.10,587.99,1708.30,504.97,1720.50,504.97C1732.70,504.97,1744.90,528.03,1757.10,541.87C1769.30,555.70,1781.50,587.99,1793.70,587.99C1805.90,587.99,1818.10,562.62,1830.30,537.25" stroke="#e8591c" stroke-width="2" stroke-dasharray="5 5" fill="none"/>
<g><rect x="612.50" y="746.85" width="14" height="10.5" fill="#c2410c"/><text x="631.00" y="756.80" font-size="16.48" letter-spacing="0.158" fill="#c2410c" text-anchor="start" font-weight="400">Em Atraso</text><rect x="719.50" y="746.85" width="14" height="10.5" fill="#86efac"/><text x="737.20" y="756.80" font-size="16.48" letter-spacing="0.169" fill="#86efac" text-anchor="start" font-weight="400">Ent. Previstas</text><rect x="852.10" y="746.85" width="14" height="10.5" fill="#15803d"/><text x="870.00" y="756.80" font-size="16.48" letter-spacing="0.063" fill="#15803d" text-anchor="start" font-weight="400">Ent. Realizadas</text><path transform="translate(997.10,745.1) scale(0.4375)" d="M0,16h10.667A5.333,5.333,0,1,1,21.333,16H32M21.333,16A5.333,5.333,0,1,1,10.667,16" stroke="#e8591c" stroke-width="4" fill="none"/><text x="1015.10" y="756.80" font-size="16.48" letter-spacing="0.247" fill="#e8591c" text-anchor="start" font-weight="400">Saldo Previsto</text><path transform="translate(1135.00,745.1) scale(0.4375)" d="M0,16h10.667A5.333,5.333,0,1,1,21.333,16H32M21.333,16A5.333,5.333,0,1,1,10.667,16" stroke="#1e40af" stroke-width="4" fill="none"/><text x="1152.90" y="756.80" font-size="16.48" letter-spacing="0.153" fill="#1e40af" text-anchor="start" font-weight="400">Saldo Realizado</text><rect x="1285.20" y="746.85" width="14" height="10.5" fill="#fca5a5"/><text x="1303.20" y="756.80" font-size="16.48" letter-spacing="0.077" fill="#fca5a5" text-anchor="start" font-weight="400">Saí. Previstas</text><rect x="1416.50" y="746.85" width="14" height="10.5" fill="#b91c1c"/><text x="1434.20" y="756.80" font-size="16.48" letter-spacing="-0.022" fill="#b91c1c" text-anchor="start" font-weight="400">Saí. Realizadas</text></g>
</svg>
<section style="position:absolute;left:299px;top:812px;width:1605px;height:300px;border-radius:11px;background:#fff;box-shadow:0 1px 2px rgba(15,23,42,.09),0 0 1px rgba(15,23,42,.06)"></section>
<h2 style="position:absolute;left:323.80px;top:837px;font-size:18.54px;line-height:25px;font-weight:700;letter-spacing:-0.076px;color:#14213d;white-space:nowrap;margin:0;">Detalhamento Diário</h2>
<div style="position:absolute;left:324px;top:880px;width:1555px;height:40px;background:#f8f9fb;border-bottom:1px solid #e5e7eb;box-sizing:border-box"></div>
<div style="position:absolute;left:332.00px;top:890px;font-size:14.42px;line-height:20px;font-weight:700;letter-spacing:-0.26px;color:#111827;white-space:nowrap;">DATA</div>
<div style="position:absolute;left:479.00px;top:890px;font-size:14.42px;line-height:20px;font-weight:700;letter-spacing:-0.239px;color:#15803d;white-space:nowrap;">ENT. REALIZADAS</div>
<div style="position:absolute;left:692.50px;top:890px;font-size:14.42px;line-height:20px;font-weight:700;letter-spacing:-0.361px;color:#b91c1c;white-space:nowrap;">SAÍ. REALIZADAS</div>
<div style="position:absolute;left:898.00px;top:890px;font-size:14.42px;line-height:20px;font-weight:700;letter-spacing:-0.422px;color:#1e40af;white-space:nowrap;">SALDO REALIZADO</div>
<div style="position:absolute;left:1123.50px;top:890px;font-size:14.42px;line-height:20px;font-weight:700;letter-spacing:-0.298px;color:#c2410c;white-space:nowrap;">EM ATRASO</div>
<div style="position:absolute;left:1292.20px;top:890px;font-size:14.42px;line-height:20px;font-weight:700;letter-spacing:-0.141px;color:#15803d;white-space:nowrap;">ENT. PREVISTAS</div>
<div style="position:absolute;left:1488.70px;top:890px;font-size:14.42px;line-height:20px;font-weight:700;letter-spacing:-0.272px;color:#b91c1c;white-space:nowrap;">SAÍ. PREVISTAS</div>
<div style="position:absolute;left:1678.40px;top:890px;font-size:14.42px;line-height:20px;font-weight:700;letter-spacing:-0.382px;color:#c2410c;white-space:nowrap;">SALDO PREVISTO</div>
<div style="position:absolute;left:324px;top:920.10px;width:1555px;height:37.6px;background:#fefce8;border-bottom:1px solid #e5e7eb;box-sizing:border-box"></div>
<div style="position:absolute;left:332.00px;top:929px;font-size:14.42px;line-height:20px;font-weight:400;letter-spacing:0.644px;color:#111827;white-space:nowrap;">14/03/2026</div>
<div style="position:absolute;left:479.00px;top:929px;font-size:14.42px;line-height:20px;font-weight:400;letter-spacing:0.327px;color:#15803d;white-space:nowrap;">R$ 0,00</div>
<div style="position:absolute;left:692.50px;top:929px;font-size:14.42px;line-height:20px;font-weight:400;letter-spacing:0.327px;color:#b91c1c;white-space:nowrap;">R$ 0,00</div>
<div style="position:absolute;left:898.00px;top:929px;font-size:14.42px;line-height:20px;font-weight:400;letter-spacing:0.403px;color:#1e40af;white-space:nowrap;">R$ 2.500,00</div>
<div style="position:absolute;left:1123.50px;top:929px;font-size:14.42px;line-height:20px;font-weight:400;letter-spacing:0.155px;color:#c2410c;white-space:nowrap;">R$ -11.000,00</div>
<div style="position:absolute;left:1292.20px;top:929px;font-size:14.42px;line-height:20px;font-weight:400;letter-spacing:0.327px;color:#15803d;white-space:nowrap;">R$ 0,00</div>
<div style="position:absolute;left:1488.70px;top:929px;font-size:14.42px;line-height:20px;font-weight:400;letter-spacing:0.327px;color:#b91c1c;white-space:nowrap;">R$ 0,00</div>
<div style="position:absolute;left:1678.40px;top:929px;font-size:14.42px;line-height:20px;font-weight:400;letter-spacing:0.505px;color:#c2410c;white-space:nowrap;">R$ -8.500,00</div>
<div style="position:absolute;left:324px;top:957.70px;width:1555px;height:37.6px;background:#fff;border-bottom:1px solid #e5e7eb;box-sizing:border-box"></div>
<div style="position:absolute;left:332.00px;top:966px;font-size:14.42px;line-height:20px;font-weight:400;letter-spacing:0.584px;color:#111827;white-space:nowrap;">15/03/2026</div>
<div style="position:absolute;left:479.00px;top:966px;font-size:14.42px;line-height:20px;font-weight:400;letter-spacing:0.327px;color:#15803d;white-space:nowrap;">R$ 0,00</div>
<div style="position:absolute;left:692.50px;top:966px;font-size:14.42px;line-height:20px;font-weight:400;letter-spacing:0.327px;color:#b91c1c;white-space:nowrap;">R$ 0,00</div>
<div style="position:absolute;left:898.00px;top:966px;font-size:14.42px;line-height:20px;font-weight:400;letter-spacing:0.403px;color:#1e40af;white-space:nowrap;">R$ 2.500,00</div>
<div style="position:absolute;left:1123.50px;top:966px;font-size:14.42px;line-height:20px;font-weight:400;letter-spacing:0.327px;color:#c2410c;white-space:nowrap;">R$ 0,00</div>
<div style="position:absolute;left:1292.20px;top:966px;font-size:14.42px;line-height:20px;font-weight:400;letter-spacing:0.378px;color:#15803d;white-space:nowrap;">R$ 5.000,00</div>
<div style="position:absolute;left:1488.70px;top:966px;font-size:14.42px;line-height:20px;font-weight:400;letter-spacing:0.327px;color:#b91c1c;white-space:nowrap;">R$ 0,00</div>
<div style="position:absolute;left:1678.40px;top:966px;font-size:14.42px;line-height:20px;font-weight:400;letter-spacing:0.163px;color:#c2410c;white-space:nowrap;">R$ 7.500,00</div>
<div style="position:absolute;left:324px;top:995.30px;width:1555px;height:37.6px;background:#fff;border-bottom:1px solid #e5e7eb;box-sizing:border-box"></div>
<div style="position:absolute;left:332.00px;top:1004px;font-size:14.42px;line-height:20px;font-weight:400;letter-spacing:0.94px;color:#111827;white-space:nowrap;">20/03/2026</div>
<div style="position:absolute;left:479.00px;top:1004px;font-size:14.42px;line-height:20px;font-weight:400;letter-spacing:0.327px;color:#15803d;white-space:nowrap;">R$ 0,00</div>
<div style="position:absolute;left:692.50px;top:1004px;font-size:14.42px;line-height:20px;font-weight:400;letter-spacing:0.327px;color:#b91c1c;white-space:nowrap;">R$ 0,00</div>
<div style="position:absolute;left:898.00px;top:1004px;font-size:14.42px;line-height:20px;font-weight:400;letter-spacing:0.403px;color:#1e40af;white-space:nowrap;">R$ 2.500,00</div>
<div style="position:absolute;left:1123.50px;top:1004px;font-size:14.42px;line-height:20px;font-weight:400;letter-spacing:0.327px;color:#c2410c;white-space:nowrap;">R$ 0,00</div>
<div style="position:absolute;left:1292.20px;top:1004px;font-size:14.42px;line-height:20px;font-weight:400;letter-spacing:0.327px;color:#15803d;white-space:nowrap;">R$ 0,00</div>
<div style="position:absolute;left:1488.70px;top:1004px;font-size:14.42px;line-height:20px;font-weight:400;letter-spacing:0.46px;color:#b91c1c;white-space:nowrap;">R$ 900,00</div>
<div style="position:absolute;left:1678.40px;top:1004px;font-size:14.42px;line-height:20px;font-weight:400;letter-spacing:0.116px;color:#c2410c;white-space:nowrap;">R$ 1.600,00</div>
<div style="position:absolute;left:324px;top:1032.90px;width:1555px;height:37.6px;background:#fff;border-bottom:1px solid #e5e7eb;box-sizing:border-box"></div>
<div style="position:absolute;left:332.00px;top:1041px;font-size:14.42px;line-height:20px;font-weight:400;letter-spacing:1.001px;color:#111827;white-space:nowrap;">09/04/2026</div>
<div style="position:absolute;left:479.00px;top:1041px;font-size:14.42px;line-height:20px;font-weight:400;letter-spacing:0.327px;color:#15803d;white-space:nowrap;">R$ 0,00</div>
<div style="position:absolute;left:692.50px;top:1041px;font-size:14.42px;line-height:20px;font-weight:400;letter-spacing:0.327px;color:#b91c1c;white-space:nowrap;">R$ 0,00</div>
<div style="position:absolute;left:898.00px;top:1041px;font-size:14.42px;line-height:20px;font-weight:400;letter-spacing:0.403px;color:#1e40af;white-space:nowrap;">R$ 2.500,00</div>
<div style="position:absolute;left:1123.50px;top:1041px;font-size:14.42px;line-height:20px;font-weight:400;letter-spacing:0.327px;color:#c2410c;white-space:nowrap;">R$ 0,00</div>
<div style="position:absolute;left:1292.20px;top:1041px;font-size:14.42px;line-height:20px;font-weight:400;letter-spacing:0.378px;color:#15803d;white-space:nowrap;">R$ 5.000,00</div>
<div style="position:absolute;left:1488.70px;top:1041px;font-size:14.42px;line-height:20px;font-weight:400;letter-spacing:0.327px;color:#b91c1c;white-space:nowrap;">R$ 0,00</div>
<div style="position:absolute;left:1678.40px;top:1041px;font-size:14.42px;line-height:20px;font-weight:400;letter-spacing:0.163px;color:#c2410c;white-space:nowrap;">R$ 7.500,00</div>
</div>
</body>
</html>
